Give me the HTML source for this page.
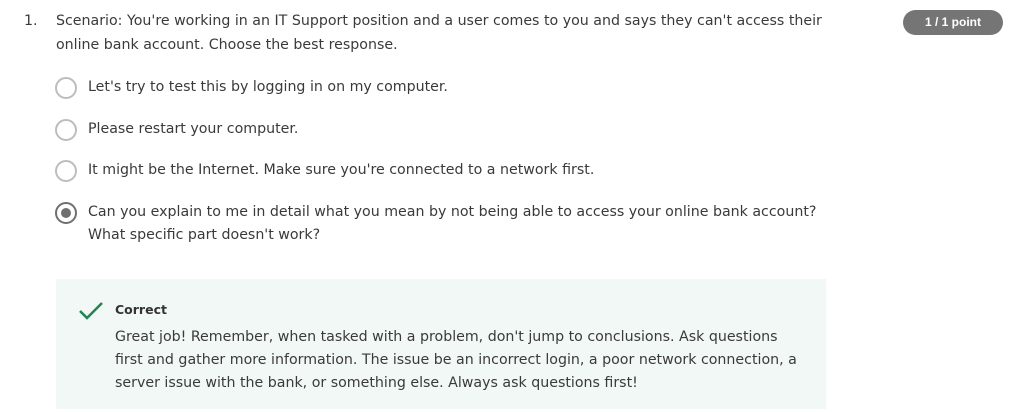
<!DOCTYPE html>
<html><head><style>
body{margin:0;width:1012px;height:412px;background:#fff;font-family:"DejaVu Sans","Liberation Sans",sans-serif;color:#3a3a3a;position:relative;overflow:hidden}
.t{position:absolute;white-space:nowrap;font-size:14.2px;letter-spacing:0}
.r{position:absolute;width:18px;height:18px;border:2px solid #bdbdbd;border-radius:50%;left:55px}
.sel{border-color:#6f6f6f}
.sel:after{content:"";position:absolute;left:4px;top:4px;width:10px;height:10px;border-radius:50%;background:#6f6f6f}
.box{position:absolute;left:56px;top:279px;width:770px;height:130px;background:#f2f8f5}
.badge{position:absolute;left:903px;top:10px;width:100px;height:25px;border-radius:13px;background:#757575;color:#fff;font:bold 12px "Liberation Sans",sans-serif;text-align:center;line-height:25px}
</style></head><body>
<div class="t" style="left:24px;top:13px">1.</div>
<div class="t" style="left:56px;top:13px">Scenario: You're working in an IT Support position and a user comes to you and says they can't access their</div>
<div class="t" style="left:56px;top:37px">online bank account. Choose the best response.</div>
<div class="badge">1 / 1 point</div>
<div class="r" style="top:77px"></div><div class="t" style="left:88px;top:79px">Let's try to test this by logging in on my computer.</div>
<div class="r" style="top:119px"></div><div class="t" style="left:88px;top:121px">Please restart your computer.</div>
<div class="r" style="top:160px"></div><div class="t" style="left:88px;top:162px">It might be the Internet. Make sure you're connected to a network first.</div>
<div class="r sel" style="top:202px"></div><div class="t" style="left:88px;top:204px">Can you explain to me in detail what you mean by not being able to access your online bank account?</div>
<div class="t" style="left:88px;top:227px">What specific part doesn't work?</div>
<div class="box"></div>
<svg style="position:absolute;left:78px;top:300px" width="26" height="22" viewBox="0 0 26 22"><path d="M2 11 L9 18 L24 3" fill="none" stroke="#1f8354" stroke-width="2.5"/></svg>
<div class="t" style="left:115px;top:302px;font-weight:bold;font-size:12.5px;color:#333">Correct</div>
<div class="t" style="left:115px;top:329px">Great job! Remember, when tasked with a problem, don't jump to conclusions. Ask questions</div>
<div class="t" style="left:115px;top:352px">first and gather more information. The issue be an incorrect login, a poor network connection, a</div>
<div class="t" style="left:115px;top:375px">server issue with the bank, or something else. Always ask questions first!</div>
</body></html>
